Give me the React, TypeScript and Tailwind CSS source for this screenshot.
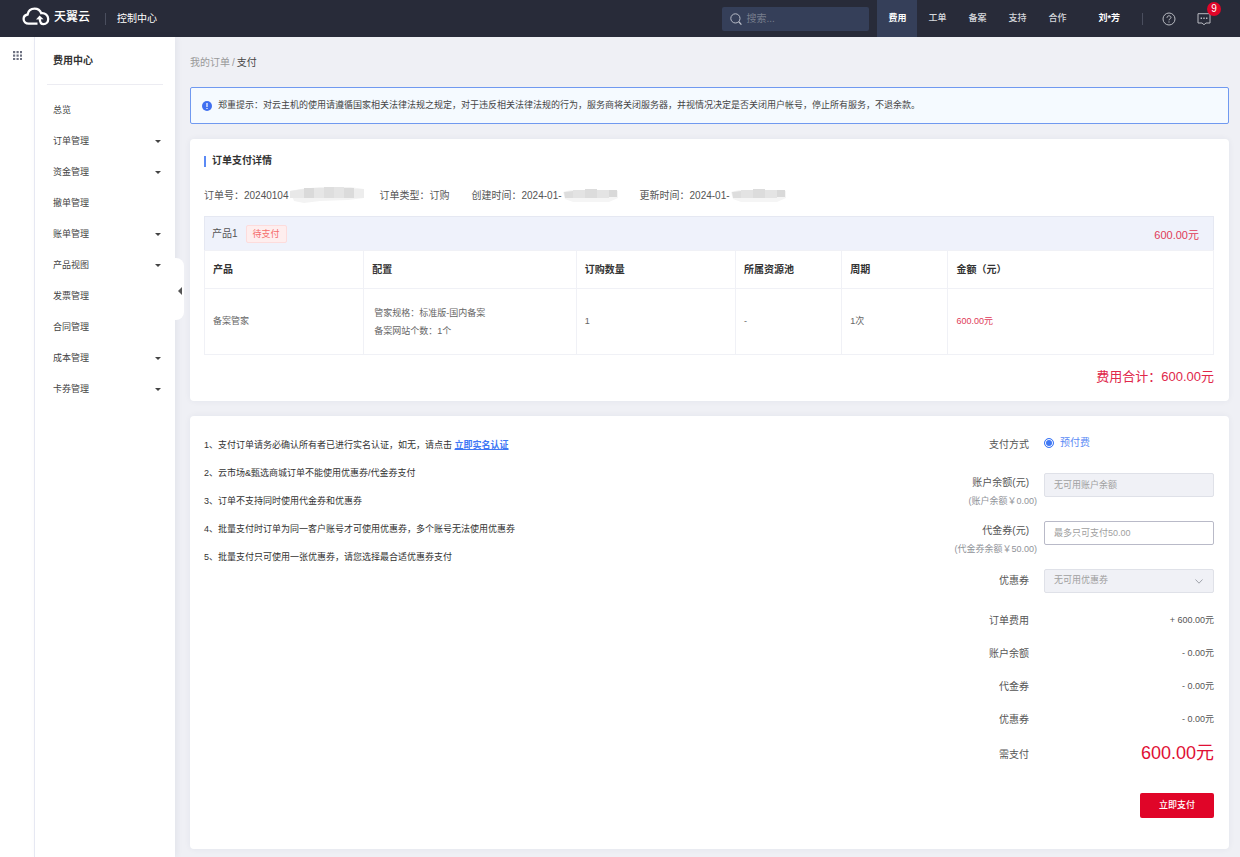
import React from "react";

const navItems = ["费用", "工单", "备案", "支持", "合作"];

const menuItems = [
  { label: "总览", children: false },
  { label: "订单管理", children: true },
  { label: "资金管理", children: true },
  { label: "撤单管理", children: false },
  { label: "账单管理", children: true },
  { label: "产品视图", children: true },
  { label: "发票管理", children: false },
  { label: "合同管理", children: false },
  { label: "成本管理", children: true },
  { label: "卡券管理", children: true },
];

const summary = [
  { label: "订单费用", value: "+ 600.00元" },
  { label: "账户余额", value: "- 0.00元" },
  { label: "代金券", value: "- 0.00元" },
  { label: "优惠券", value: "- 0.00元" },
];

function CloudLogo() {
  return (
    <svg className="h-[19px] w-[28px]" viewBox="0 0 28 19" fill="none" stroke="#fff" strokeWidth="2.3" aria-hidden="true">
      <path d="M15.5 16.6H6.6C3.8 16.6 1.6 14.8 1.6 12.1C1.6 9.6 3.3 7.9 5.6 7.5C6.2 4.1 9 1.7 12.6 1.7C15.8 1.7 18.2 3.5 19.3 6.2C23.3 5.8 26.2 8.4 26.2 12C26.2 15.2 24 17.2 21.6 17.2C19.2 17.2 17.8 15.2 17.8 11.5" />
      <path d="M14 12.6L17.6 8.4L21.6 12.2Z" fill="#fff" stroke="none" />
    </svg>
  );
}

function Header() {
  return (
    <header className="flex h-[37px] items-center bg-[#282b39] text-[9px] text-[#d5d7dc]">
      <a href="#" className="flex items-center gap-1 pb-1 pl-[22px] text-white">
        <CloudLogo />
        <span className="text-[12px] font-medium leading-4">天翼云</span>
      </a>
      <span className="ml-[15px] h-3 w-px bg-[#4a4e5e]" />
      <a href="#" className="ml-[11px] text-[10px] text-white">控制中心</a>
      <label className="ml-auto flex h-6 w-[147px] items-center gap-1 rounded-[2px] bg-[#353f59] pl-2">
        <svg className="size-3 shrink-0" viewBox="0 0 12 12" fill="none" stroke="#b9bdc8" aria-hidden="true">
          <circle cx="5.4" cy="5.4" r="4.6" />
          <path d="M8.8 8.8L11.4 11.6" strokeWidth="1.3" />
        </svg>
        <input type="search" aria-label="搜索" placeholder="搜索..." className="w-full min-w-0 bg-transparent text-[10px] outline-none placeholder:text-[#777d8c]" />
      </label>
      <nav className="ml-2 flex h-full">
        {navItems.map((item, i) => (
          <a
            key={item}
            href="#"
            className={
              i === 0
                ? "flex w-10 items-center justify-center bg-[#353f59] font-bold text-white"
                : "flex w-10 items-center justify-center font-medium"
            }
          >
            {item}
          </a>
        ))}
      </nav>
      <a href="#" className="ml-[21px] font-bold text-white">刘*芳</a>
      <span className="ml-[22px] h-3 w-px bg-[#4a4e5e]" />
      <button type="button" aria-label="帮助" className="ml-[19px]">
        <svg className="size-[14px]" viewBox="0 0 14 14" fill="none" stroke="#b9bbc2" aria-hidden="true">
          <circle cx="7" cy="7" r="6" />
          <path d="M5 5.8C5 4.5 5.8 3.8 7 3.8C8.2 3.8 9 4.5 9 5.5C9 6.7 7 6.8 7 8.3M7 9.4V10.6" />
        </svg>
      </button>
      <button type="button" aria-label="消息" className="relative ml-[21px] mr-[29px]">
        <svg className="size-[14px]" viewBox="0 0 14 14" fill="none" stroke="#b9bbc2" aria-hidden="true">
          <path d="M1 1.7H13V11H9L7 12.7L5 11H1Z" />
          <path d="M3.6 6.2H5M6.3 6.2H7.7M9 6.2H10.4" strokeWidth="1.4" />
        </svg>
        <span className="absolute -right-[10px] -top-[10px] flex size-[14px] items-center justify-center rounded-full bg-[#e00528] text-[10px] leading-none text-white">9</span>
      </button>
    </header>
  );
}

function Sidebar() {
  return (
    <aside className="relative w-[141px] shrink-0 border-l border-[#e6e8f2] bg-white px-3 shadow-[2px_0_6px_rgba(40,50,80,0.06)]">
      <h2 className="border-b border-[#ececf2] pb-[15px] pl-[6px] pt-4 text-[10px] font-bold leading-4 text-[#333]">费用中心</h2>
      <ul className="pt-[10px]">
        {menuItems.map((item) => (
          <li key={item.label}>
            <a href="#" className="flex h-[31px] items-center justify-between pl-[6px] pr-[2px] text-[9px] text-[#444]">
              {item.label}
              {item.children && (
                <svg className="h-[3px] w-[6px]" viewBox="0 0 6 3" fill="#444" aria-hidden="true">
                  <path d="M0 0H6L3 3Z" />
                </svg>
              )}
            </a>
          </li>
        ))}
      </ul>
      <button
        type="button"
        aria-label="收起菜单"
        className="absolute -right-[9px] top-[221px] flex h-[62px] w-[9px] items-center justify-center rounded-r-[8px] bg-white pt-1"
      >
        <svg className="h-2 w-1" viewBox="0 0 4 8" fill="#555" aria-hidden="true">
          <path d="M4 0V8L0 4Z" />
        </svg>
      </button>
    </aside>
  );
}

function MaskedNumber() {
  return (
    <svg className="h-4 w-[74px]" viewBox="0 0 74 16" aria-hidden="true">
      <path d="M0 4L10 2L30 0H60L74 2V11L58 13L30 14L14 16L4 14Z" fill="#f3f3f3" />
      <path d="M0 4L14 2V11H0Z" fill="#e8e8e8" />
      <path d="M14 1H24V11H14Z" fill="#dadada" />
      <path d="M24 1H34V11H24Z" fill="#e6e6e6" />
      <path d="M34 0H44V11H34Z" fill="#dedede" />
      <path d="M44 0H54V11H44Z" fill="#e4e4e4" />
      <path d="M54 1H64V11H54Z" fill="#dbdbdb" />
      <path d="M64 2H74V11H64Z" fill="#ededed" />
    </svg>
  );
}

function MaskedTime() {
  return (
    <svg className="h-4 w-[55px]" viewBox="0 0 55 16" aria-hidden="true">
      <path d="M0 5L8 3H50L55 4V11L46 15H10L2 12Z" fill="#f5f5f5" />
      <path d="M1 5L10 4V11H2Z" fill="#dddddd" />
      <path d="M10 3H22V11H10Z" fill="#e3e3e3" />
      <path d="M22 2H34V11H22Z" fill="#dcdcdc" />
      <path d="M34 3H46V11H34Z" fill="#e4e4e4" />
      <path d="M46 3H54V10H46Z" fill="#d9d9d9" />
    </svg>
  );
}

function OrderCard() {
  return (
    <section className="rounded-[4px] bg-white pb-[14px] pl-[14px] pr-[15px] pt-[14px] shadow-[0_0_6px_rgba(40,50,80,0.06)]">
      <h1 className="flex items-center gap-[6px] text-[10px] font-bold leading-4 text-[#333]">
        <span className="h-[11px] w-[2px] bg-[#5b8af5]" />
        订单支付详情
      </h1>
      <div className="flex h-[47px] items-center pt-[5px] text-[10px] text-[#555]">
        <span className="flex items-center gap-px">订单号：20240104<MaskedNumber /></span>
        <span className="ml-4">订单类型：订购</span>
        <span className="ml-[22px] flex items-center gap-px">创建时间：2024-01-<MaskedTime /></span>
        <span className="ml-[22px] flex items-center gap-px">更新时间：2024-01-<MaskedTime /></span>
      </div>
      <div className="flex h-[34px] items-center border border-b-0 border-[#e5e8f2] bg-[#eff2fb] px-[7px] text-[10px] text-[#555]">
        <span>产品1</span>
        <span className="ml-2 rounded-[2px] border border-[#fddcdc] bg-[#feeeee] px-[6px] text-[9px] leading-4 text-[#f56c6c]">待支付</span>
        <span className="ml-auto pr-[7px] pt-1 text-[11px] text-[#e03a58]">600.00元</span>
      </div>
      <table className="w-full table-fixed border-collapse text-left">
        <colgroup>
          <col className="w-[150px]" />
          <col className="w-[200px]" />
          <col className="w-[150px]" />
          <col className="w-[100px]" />
          <col className="w-[100px]" />
          <col className="w-[250px]" />
        </colgroup>
        <thead>
          <tr className="h-[38px] text-[10px] text-[#333]">
            {["产品", "配置", "订购数量", "所属资源池", "周期", "金额（元）"].map((h) => (
              <th key={h} className="border border-[#f0f1f6] px-2 font-bold">{h}</th>
            ))}
          </tr>
        </thead>
        <tbody>
          <tr className="h-[66px] text-[9px] text-[#666]">
            <td className="border border-[#f0f1f6] px-2">备案管家</td>
            <td className="border border-[#f0f1f6] px-[10px] leading-[18px]">
              <p>管家规格：标准版-国内备案</p>
              <p>备案网站个数：1个</p>
            </td>
            <td className="border border-[#f0f1f6] px-2">1</td>
            <td className="border border-[#f0f1f6] px-2">-</td>
            <td className="border border-[#f0f1f6] px-2">1次</td>
            <td className="border border-[#f0f1f6] px-2 text-[#e03a58]">600.00元</td>
          </tr>
        </tbody>
      </table>
      <p className="pt-3 text-right text-[13px] leading-5 text-[#e0284a]">费用合计：600.00元</p>
    </section>
  );
}

function PaymentCard() {
  return (
    <section className="flex grow justify-between rounded-[4px] bg-white pb-7 pl-[14px] pr-[15px] pt-[15px] shadow-[0_0_6px_rgba(40,50,80,0.06)]">
      <ol className="text-[9px] leading-7 text-[#333]">
        <li>
          1、支付订单请务必确认所有者已进行实名认证，如无，请点击{" "}
          <a href="#" className="font-bold text-[#3f78f5] underline">立即实名认证</a>
        </li>
        <li>2、云市场&amp;甄选商城订单不能使用优惠券/代金券支付</li>
        <li>3、订单不支持同时使用代金券和优惠券</li>
        <li>4、批量支付时订单为同一客户账号才可使用优惠券，多个账号无法使用优惠券</li>
        <li>5、批量支付只可使用一张优惠券，请您选择最合适优惠券支付</li>
      </ol>
      <form className="w-[260px] shrink-0 text-[10px] text-[#555]">
        <div className="flex h-[42px] items-start gap-[7px] leading-7">
          <span className="grow pr-2 text-right">支付方式</span>
          <label className="flex w-[170px] items-center gap-[6px] leading-6 text-[#5b8af5]">
            <input
              type="radio"
              name="method"
              defaultChecked
              className="size-[10px] appearance-none rounded-full border border-[#3f78f5] bg-[#3f78f5] shadow-[inset_0_0_0_1px_#fff]"
            />
            预付费
          </label>
        </div>
        <div className="flex h-12 gap-[7px]">
          <label htmlFor="balance" className="grow text-right">
            <span className="block pr-2 leading-5">账户余额(元)</span>
            <span className="block text-[9px] leading-4 text-[#909399]">(账户余额￥0.00)</span>
          </label>
          <input id="balance" disabled placeholder="无可用账户余额" className="h-6 w-[170px] rounded-[2px] border border-[#dfe1e8] bg-[#f0f1f6] px-[9px] text-[9px] placeholder:text-[#a0a0a0]" />
        </div>
        <div className="flex h-12 gap-[7px]">
          <label htmlFor="voucher" className="grow text-right">
            <span className="block pr-2 leading-5">代金券(元)</span>
            <span className="block text-[9px] leading-4 text-[#909399]">(代金券余额￥50.00)</span>
          </label>
          <input id="voucher" placeholder="最多只可支付50.00" className="h-6 w-[170px] rounded-[2px] border border-[#b9bac8] bg-white px-[9px] text-[9px] placeholder:text-[#a0a0a0]" />
        </div>
        <div className="flex h-[35px] gap-[7px]">
          <label htmlFor="coupon" className="grow pr-2 text-right leading-6">优惠券</label>
          <div className="relative h-6 w-[170px]">
            <select id="coupon" disabled className="h-6 w-full appearance-none rounded-[2px] border border-[#dfe1e8] bg-[#f0f1f6] px-[9px] text-[9px] text-[#a0a0a0] opacity-100">
              <option>无可用优惠券</option>
            </select>
            <svg className="absolute right-[11px] top-[10px] h-[5px] w-2" viewBox="0 0 8 5" fill="none" stroke="#a0a3ab" aria-hidden="true">
              <path d="M0.5 0.5L4 4.2L7.5 0.5" />
            </svg>
          </div>
        </div>
        <dl>
          {summary.map((row) => (
            <div key={row.label} className="flex h-[33px] items-center gap-[7px]">
              <dt className="grow pr-2 text-right">{row.label}</dt>
              <dd className="w-[170px] text-right text-[9px]">{row.value}</dd>
            </div>
          ))}
          <div className="flex h-9 items-center gap-[7px]">
            <dt className="grow pr-2 text-right">需支付</dt>
            <dd className="w-[170px] pb-[2px] text-right text-[18px] leading-6 text-[#e00f35]">600.00元</dd>
          </div>
        </dl>
        <div className="flex justify-end pt-[21px]">
          <button type="button" className="h-[25px] w-[74px] rounded-[2px] bg-[#e00528] text-[9px] font-medium text-white">立即支付</button>
        </div>
      </form>
    </section>
  );
}

export default function App() {
  return (
    <div className="flex min-h-screen flex-col bg-[#eff0f5] font-['Liberation_Sans','Noto_Sans_CJK_SC',sans-serif]">
      <Header />
      <div className="flex grow">
        <div className="flex w-[34px] shrink-0 justify-center bg-white pt-[14px]">
          <button type="button" aria-label="全部产品" className="size-[9px]">
            <svg className="size-[9px]" viewBox="0 0 9 9" fill="#6c7080" aria-hidden="true">
              {[0, 3.5, 7].map((y) => [0, 3.5, 7].map((x) => <rect key={`${x}-${y}`} x={x} y={y} width="2.2" height="2.2" />))}
            </svg>
          </button>
        </div>
        <Sidebar />
        <main className="flex min-w-0 grow flex-col pb-2 pl-[15px] pr-[11px]">
          <nav className="flex h-[50px] items-center gap-[2px] text-[10px] text-[#999]">
            <a href="#">我的订单</a>
            <span>/</span>
            <span className="text-[#444]">支付</span>
          </nav>
          <div role="alert" className="mb-[15px] flex h-[37px] items-center gap-[6px] rounded-[2px] border border-[#7099f0] bg-[#f5faff] px-[11px] text-[9px] text-[#444]">
            <svg className="size-[10px]" viewBox="0 0 10 10" aria-hidden="true">
              <circle cx="5" cy="5" r="5" fill="#3f6ff0" />
              <path d="M5 2V6M5 7V8" stroke="#fff" strokeWidth="1.2" />
            </svg>
            <p>郑重提示：对云主机的使用请遵循国家相关法律法规之规定，对于违反相关法律法规的行为，服务商将关闭服务器，并视情况决定是否关闭用户帐号，停止所有服务，不退余款。</p>
          </div>
          <OrderCard />
          <div className="flex grow flex-col pt-[15px]">
            <PaymentCard />
          </div>
        </main>
      </div>
    </div>
  );
}
